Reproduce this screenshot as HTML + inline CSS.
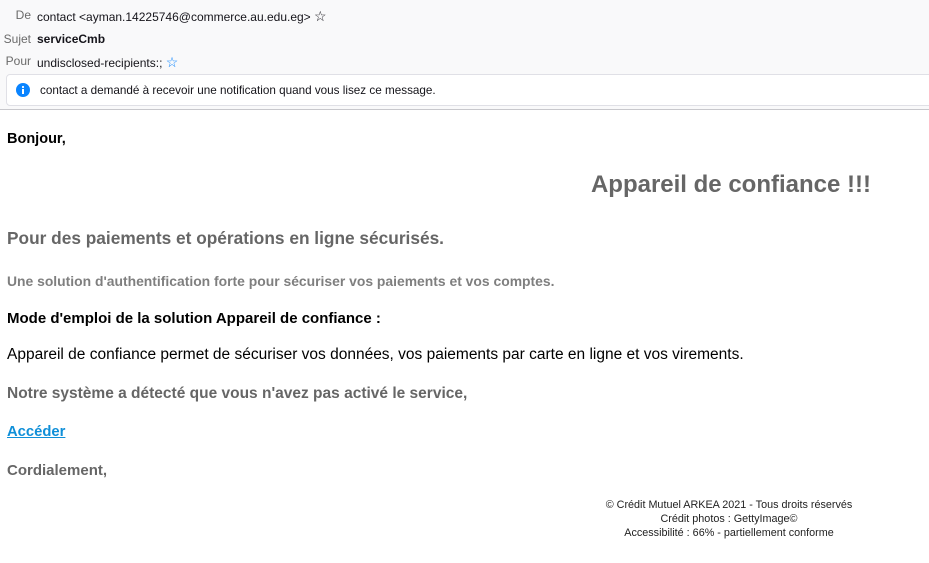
<!DOCTYPE html>
<html><head><meta charset="utf-8"><style>
body{margin:0;width:929px;height:563px;background:#fff;font-family:"Liberation Sans",sans-serif;position:relative;overflow:hidden}
.hdr{position:absolute;left:0;top:0;width:929px;height:110px;background:#f9f9fa}
.a{position:absolute;white-space:nowrap}
.lbl{color:#6a6a6a;font-size:12px;text-align:right;width:31px;left:0}
.v{left:37px;font-size:12px;color:#15141a}
.note{position:absolute;left:6px;top:74px;width:940px;height:30px;background:#fff;border:1px solid #e0e0e6;border-radius:4px}
.sep{position:absolute;left:0;top:109px;width:929px;height:1px;background:#c8c8cc}
.g{color:#666;font-weight:bold}
</style></head><body>
<div class="hdr"></div>
<div class="a lbl" style="top:8px">De</div>
<div class="a v" style="top:8px">contact &lt;ayman.14225746@commerce.au.edu.eg&gt; <span style="font-size:14px">☆</span></div>
<div class="a lbl" style="top:32px">Sujet</div>
<div class="a v" style="top:32px;font-weight:bold">serviceCmb</div>
<div class="a lbl" style="top:54px">Pour</div>
<div class="a v" style="top:54px">undisclosed-recipients:; <span style="color:#0a84ff;font-size:14px">☆</span></div>
<div class="note"></div>
<svg class="a" style="left:16px;top:83px" width="14" height="14"><circle cx="7" cy="7" r="7" fill="#0a84ff"/><rect x="6" y="6" width="2" height="5" fill="#fff"/><circle cx="7" cy="4" r="1.1" fill="#fff"/></svg>
<div class="a" style="left:40px;top:84px;font-size:11.7px;color:#15141a">contact a demandé à recevoir une notification quand vous lisez ce message.</div>
<div class="sep"></div>
<div class="a" style="left:7px;top:131px;font-size:14.5px;font-weight:bold">Bonjour,</div>
<div class="a g" style="right:58px;top:171px;font-size:24px">Appareil de confiance !!!</div>
<div class="a g" style="left:7px;top:228px;font-size:17.3px">Pour des paiements et opérations en ligne sécurisés.</div>
<div class="a" style="left:7px;top:273px;font-size:13.9px;font-weight:bold;color:#7f7f7f">Une solution d'authentification forte pour sécuriser vos paiements et vos comptes.</div>
<div class="a" style="left:7px;top:310px;font-size:15px;font-weight:bold">Mode d'emploi de la solution Appareil de confiance :</div>
<div class="a" style="left:7px;top:346px;font-size:15.5px">Appareil de confiance permet de sécuriser vos données, vos paiements par carte en ligne et vos virements.</div>
<div class="a g" style="left:7px;top:385px;font-size:15.5px">Notre système a détecté que vous n'avez pas activé le service,</div>
<div class="a" style="left:7px;top:424px;font-size:14.8px;font-weight:bold;color:#0f8fd8;text-decoration:underline">Accéder</div>
<div class="a g" style="left:7px;top:462px;font-size:15px">Cordialement,</div>
<div class="a" style="left:579px;width:300px;top:498px;font-size:10.8px;line-height:14px;text-align:center;color:#222">© Crédit Mutuel ARKEA 2021 - Tous droits réservés<br>Crédit photos : GettyImage©<br>Accessibilité : 66% - partiellement conforme</div>
</body></html>
